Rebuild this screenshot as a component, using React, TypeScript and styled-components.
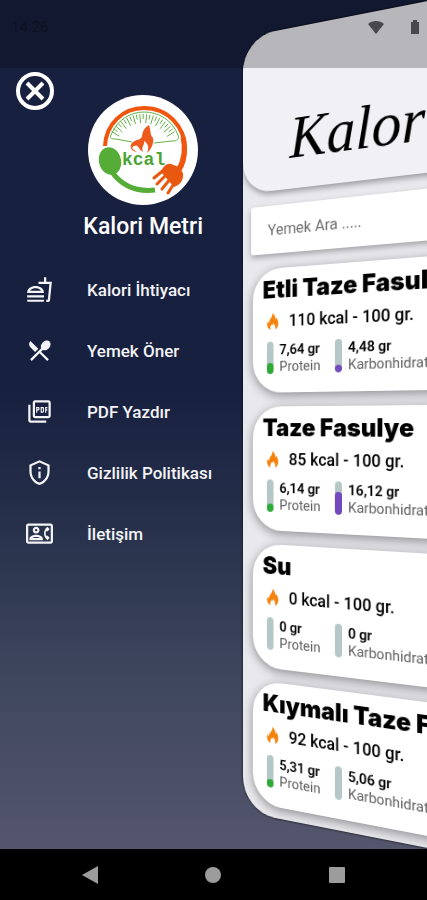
import React from "react";
import styled, { createGlobalStyle } from "styled-components";
import {
  MdOutlineContactPhone,
  MdOutlineFastfood,
  MdOutlinePictureAsPdf,
  MdOutlinePrivacyTip,
  MdRestaurantMenu,
} from "react-icons/md";
import type { IconType } from "react-icons";

const GlobalStyle = createGlobalStyle`
  * { box-sizing: border-box; }
  body { margin: 0; background: #000; font-family: Roboto, "Liberation Sans", sans-serif; }
  button, input { font: inherit; }
`;

const Screen = styled.div`
  display: flex;
  flex-direction: column;
  min-height: 100vh;
  overflow: hidden;
`;

const Stage = styled.main`
  position: relative;
  flex: 1;
  display: flex;
  overflow: hidden;
  background: linear-gradient(#182040 0%, #182040 46%, #232c47 58%, #3c455c 78%, #54566d 100%);
`;

const StatusBar = styled.header`
  position: absolute;
  inset: 0 0 auto 0;
  z-index: 2;
  height: 68px;
  padding: 0 6px 14px 11px;
  display: flex;
  align-items: center;
  gap: 24px;
  background: rgba(0, 0, 0, 0.24);
  color: #0d1220;
  font-size: 15px;
`;

const Clock = styled.time`
  flex: 1;
`;

const Drawer = styled.nav`
  width: 57%;
  padding: 71px 0 24px 15px;
`;

const CloseButton = styled.button`
  display: block;
  width: 40px;
  height: 40px;
  padding: 0;
  border: 0;
  background: none;
`;

const Brand = styled.div`
  display: flex;
  flex-direction: column;
  align-items: center;
  gap: 8px;
  margin: -16px 0 18px 28px;
`;

const BrandName = styled.h1`
  margin: 0;
  color: #fff;
  font-size: 23px;
  line-height: 28px;
  font-weight: 500;
`;

const Menu = styled.ul`
  margin: 0;
  padding: 0;
  list-style: none;
`;

const MenuLink = styled.a`
  display: flex;
  align-items: center;
  gap: 34px;
  height: 61px;
  padding-left: 11px;
  color: #f4f4f6;
  font-size: 17px;
  font-weight: 500;
  text-decoration: none;
  white-space: nowrap;

  svg { width: 27px; height: 27px; }
`;

const Panel = styled.section`
  position: absolute;
  inset: 0 auto 0 57%;
  width: 100%;
  overflow: hidden;
  border-radius: 38px;
  background: #e9e8ed;
  box-shadow: 0 0 3px #000;
  transform-origin: left center;
  transform: perspective(1100px) scale(0.912) rotateY(-27deg);
`;

const PanelHeader = styled.div`
  height: 172px;
  padding: 76px 0 0 56px;
  border-radius: 0 0 34px 34px;
  background: #f1f0f5;
  box-shadow: 0 3px 6px rgba(0, 0, 0, 0.35);
`;

const PanelTitle = styled.h2`
  margin: 0;
  color: #000;
  font-family: "Liberation Serif", serif;
  font-style: italic;
  font-weight: 400;
  font-size: 64px;
  line-height: 84px;
  white-space: nowrap;
`;

const SearchInput = styled.input`
  display: block;
  width: calc(100% - 20px);
  height: 52px;
  margin: 16px 10px;
  padding: 0 20px;
  border: 0;
  border-radius: 3px;
  background: #fff;
  box-shadow: 0 3px 6px rgba(0, 0, 0, 0.3);
  font-size: 17px;

  &::placeholder { color: #6e6e70; opacity: 1; }
`;

const FoodList = styled.div`
  display: flex;
  flex-direction: column;
  gap: 15px;
  padding: 0 12px;
`;

const Card = styled.article`
  height: 134px;
  padding: 6px 12px;
  border-radius: 34px;
  background: #fff;
  box-shadow: 0 3px 12px rgba(0, 0, 0, 0.4);
`;

const FoodName = styled.h3`
  margin: 0;
  font-family: Inter, sans-serif;
  font-size: 26px;
  line-height: 34px;
  font-weight: 900;
  white-space: nowrap;
`;

const Energy = styled.p`
  display: flex;
  align-items: center;
  gap: 12px;
  margin: 0 0 5px;
  padding-left: 5px;
  font-size: 18px;
  line-height: 34px;
  font-weight: 500;
`;

const Nutrients = styled.div`
  display: flex;
  gap: 16px;
  padding-left: 5px;
`;

const Nutrient = styled.div`
  display: flex;
  gap: 7px;
`;

const Track = styled.div`
  display: flex;
  align-items: flex-end;
  width: 8px;
  height: 35px;
  border-radius: 4px;
  overflow: hidden;
  background: #b5c7c7;
`;

const Fill = styled.div<{ $tone: string }>`
  width: 100%;
  border-radius: 4px;
  background: ${(p) => p.$tone};
`;

const Amount = styled.strong`
  display: block;
  font-size: 15px;
  line-height: 18px;
  font-weight: 600;
  white-space: nowrap;
`;

const Label = styled.span`
  display: block;
  color: #606062;
  font-size: 15px;
  line-height: 18px;
`;

const NavBar = styled.footer`
  display: flex;
  justify-content: space-around;
  align-items: center;
  height: 51px;
  padding: 0 28px;
  background: #000;
`;

const NavButton = styled.button`
  display: flex;
  padding: 8px;
  border: 0;
  background: none;
`;

type Measure = { label: string; amount: string; level: number; tone: string };
type Food = { name: string; energy: string; nutrients: Measure[] };

const GREEN = "#2eaa36";
const PURPLE = "#7349be";

const food = (
  name: string,
  energy: string,
  protein: [string, number],
  carbs: [string, number]
): Food => ({
  name,
  energy,
  nutrients: [
    { label: "Protein", amount: protein[0], level: protein[1], tone: GREEN },
    { label: "Karbonhidrat", amount: carbs[0], level: carbs[1], tone: PURPLE },
  ],
});

const foods: Food[] = [
  food("Etli Taze Fasulye", "110 kcal - 100 gr.", ["7,64 gr", 34], ["4,48 gr", 22]),
  food("Taze Fasulye", "85 kcal - 100 gr.", ["6,14 gr", 26], ["16,12 gr", 68]),
  food("Su", "0 kcal - 100 gr.", ["0 gr", 0], ["0 gr", 0]),
  food("Kıymalı Taze Fasulye", "92 kcal - 100 gr.", ["5,31 gr", 26], ["5,06 gr", 0]),
];

const menu: { label: string; icon: IconType }[] = [
  { label: "Kalori İhtiyacı", icon: MdOutlineFastfood },
  { label: "Yemek Öner", icon: MdRestaurantMenu },
  { label: "PDF Yazdır", icon: MdOutlinePictureAsPdf },
  { label: "Gizlilik Politikası", icon: MdOutlinePrivacyTip },
  { label: "İletişim", icon: MdOutlineContactPhone },
];

function dialTicks() {
  const ticks: string[] = [];
  for (let i = 0; i <= 22; i++) {
    const a = ((-148 + i * 5.3) * Math.PI) / 180;
    const inner = i % 2 ? 32 : 28;
    ticks.push(
      `M${55 + 37 * Math.cos(a)} ${56 + 37 * Math.sin(a)}L${55 + inner * Math.cos(a)} ${56 + inner * Math.sin(a)}`
    );
  }
  return ticks.join("");
}

function Logo() {
  return (
    <svg width="110" height="110" viewBox="0 0 110 110" role="img" aria-label="kcal">
      <circle cx="55" cy="55" r="55" fill="#fff" />
      <path d="M17 51C18 29 35 13 56 13C80 13 97 32 97 54C97 63 95 70 91 76" fill="none" stroke="#f0560f" strokeWidth="4" />
      <path d="M95 42C98 55 96 66 90 76" fill="none" stroke="#f0560f" strokeWidth="5" />
      <g fill="none" stroke="#63b246" strokeWidth="1">
        <path d="M23 40C29 25 42 17 56 17C71 17 84 25 90 40C92 44 89 46 84 46L66 48M44 47L28 44C23 44 21 43 23 40" />
        <path d={dialTicks()} />
      </g>
      <path d="M61 30C63 36 62 40 65 43C66 47 64 54 59 58C62 51 59 48 56 46C57 50 53 51 55 57C49 53 51 49 46 51C42 53 46 55 49 57C42 56 41 50 45 47C50 44 53 45 54 41C55 36 56 33 61 30Z" fill="#ee5a1c" />
      <ellipse cx="22" cy="66" rx="11" ry="14" transform="rotate(-14 22 66)" fill="#55ac37" />
      <path d="M24 77C34 91 49 97 67 95" fill="none" stroke="#55ac37" strokeWidth="5" />
      <text x="34" y="70" fill="#4ba535" fontFamily="Liberation Mono, monospace" fontWeight="700" fontSize="18">kcal</text>
      <path d="M73 77C75 71 79 68 83 69L91 72L95 78C96 85 92 90 86 92Z" fill="#e8590f" />
      <path d="M77 74L66 83M79 79L69 89M83 83L74 94M87 87L80 98" stroke="#e8590f" strokeWidth="3" strokeLinecap="round" />
    </svg>
  );
}

function Flame() {
  return (
    <svg width="14" height="18" viewBox="0 0 14 18" aria-hidden>
      <path
        d="M6.5 0C10 2.5 10 5 10.5 7C11 6.5 11.2 6 11.2 5.2C13.5 8 14.5 12.5 12.6 15.5C12 16.6 11 17.4 9.8 18C10.8 15 9.4 12.8 7.4 10.8C7.4 13 6 13.6 5.4 12.6C4 14.4 4 16.2 4.6 18C0.6 16.6-0.6 12.6 0.8 9C1.4 10 1.8 10.4 2.6 10.6C2.8 6 7.4 5 6.5 0Z"
        fill="#f5820b"
      />
    </svg>
  );
}

function FoodCard({ item }: { item: Food }) {
  return (
    <Card>
      <FoodName>{item.name}</FoodName>
      <Energy>
        <Flame />
        {item.energy}
      </Energy>
      <Nutrients>
        {item.nutrients.map((n) => (
          <Nutrient key={n.label}>
            <Track>
              <Fill $tone={n.tone} style={{ height: `${n.level}%` }} />
            </Track>
            <div>
              <Amount>{n.amount}</Amount>
              <Label>{n.label}</Label>
            </div>
          </Nutrient>
        ))}
      </Nutrients>
    </Card>
  );
}

export default function App() {
  return (
    <Screen>
      <GlobalStyle />
      <Stage>
        <StatusBar>
          <Clock>14:26</Clock>
          <svg width="18" height="14" viewBox="0 0 18 14" aria-hidden>
            <path d="M1 4C5 0 13 0 17 4L9 14Z" fill="#48484a" />
          </svg>
          <svg width="12" height="14" viewBox="0 0 12 14" aria-hidden>
            <path d="M2 2H4V0H8V2H10V14H2Z" fill="#48484a" />
          </svg>
        </StatusBar>
        <Drawer>
          <CloseButton type="button" aria-label="Kapat">
            <svg width="40" height="40" viewBox="0 0 40 40" fill="none" stroke="#fff" strokeWidth="4">
              <circle cx="20" cy="20" r="17" />
              <path d="M12 12L28 28M28 12L12 28" />
            </svg>
          </CloseButton>
          <Brand>
            <Logo />
            <BrandName>Kalori Metri</BrandName>
          </Brand>
          <Menu>
            {menu.map(({ label, icon: Icon }) => (
              <li key={label}>
                <MenuLink href="#">
                  <Icon aria-hidden />
                  {label}
                </MenuLink>
              </li>
            ))}
          </Menu>
        </Drawer>
        <Panel>
          <PanelHeader>
            <PanelTitle>Kalori Metri</PanelTitle>
          </PanelHeader>
          <SearchInput type="search" aria-label="Yemek Ara" placeholder="Yemek Ara ....." />
          <FoodList>
            {foods.map((item) => (
              <FoodCard key={item.name} item={item} />
            ))}
          </FoodList>
        </Panel>
      </Stage>
      <NavBar>
        <NavButton type="button" aria-label="Geri">
          <svg width="18" height="20" viewBox="0 0 18 20"><path d="M17 1V19L1 10Z" fill="#9c9c9c" /></svg>
        </NavButton>
        <NavButton type="button" aria-label="Ana ekran">
          <svg width="18" height="18" viewBox="0 0 18 18"><circle cx="9" cy="9" r="8" fill="#9c9c9c" /></svg>
        </NavButton>
        <NavButton type="button" aria-label="Son uygulamalar">
          <svg width="18" height="18" viewBox="0 0 18 18"><rect x="1" y="1" width="16" height="16" rx="1" fill="#9c9c9c" /></svg>
        </NavButton>
      </NavBar>
    </Screen>
  );
}
